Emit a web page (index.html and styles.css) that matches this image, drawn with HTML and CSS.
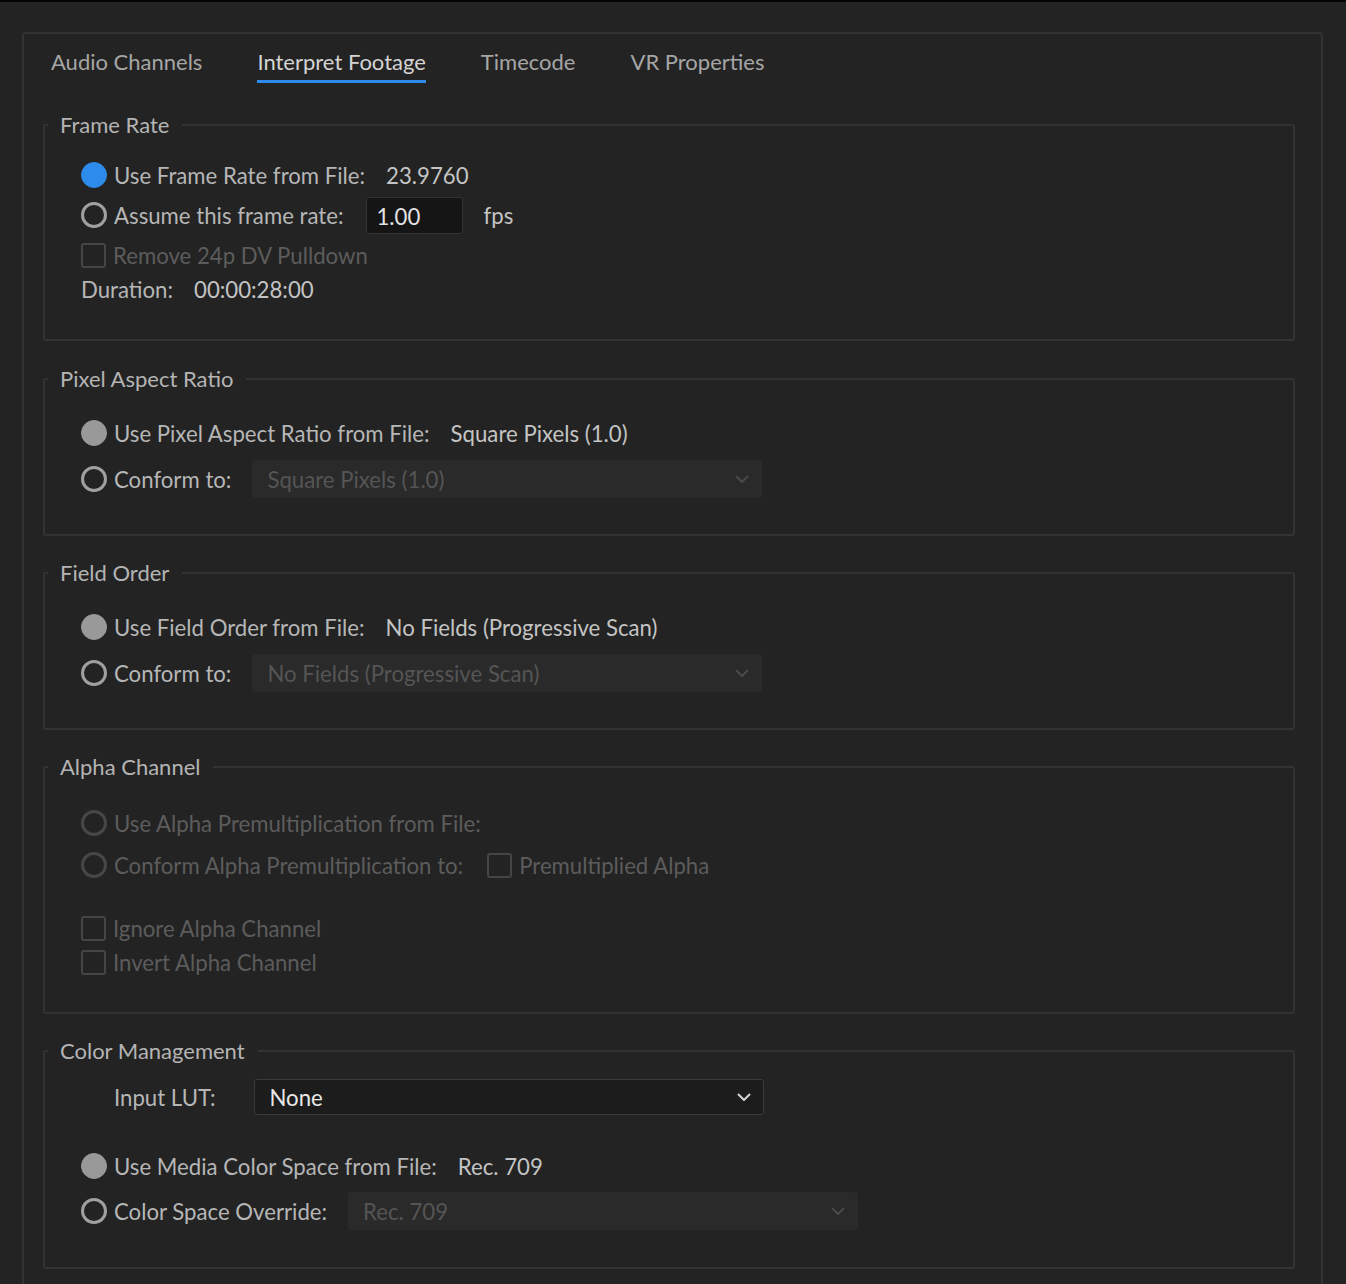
FILE: index.html
```html
<!DOCTYPE html>
<html lang="en">
<head>
    <meta charset="UTF-8">
    <title>Modify Clip</title>
    <link rel="stylesheet" href="styles.css">
</head>
<body>
    <div class="panel">
        <div class="tabs">
            <span class="tab">Audio Channels</span>
            <span class="tab active">Interpret Footage</span>
            <span class="tab">Timecode</span>
            <span class="tab">VR Properties</span>
        </div>

        <!-- Frame Rate -->
        <fieldset class="group frame-rate">
            <legend>Frame Rate</legend>
            <div class="group-body">
                <div class="row r40">
                    <label class="opt"><span class="radio on"></span>Use Frame Rate from File:</label>
                    <span class="value">23.9760</span>
                </div>
                <div class="row r40">
                    <label class="opt"><span class="radio"></span>Assume this frame rate:</label>
                    <span class="num-input">1.00</span>
                    <span class="value">fps</span>
                </div>
                <div class="row r40">
                    <label class="opt disabled"><span class="check"></span>Remove 24p DV Pulldown</label>
                </div>
                <div class="row r28">
                    <span class="label">Duration:</span>
                    <span class="value">00:00:28:00</span>
                </div>
            </div>
        </fieldset>

        <!-- Pixel Aspect Ratio -->
        <fieldset class="group pair">
            <legend>Pixel Aspect Ratio</legend>
            <div class="group-body">
                <div class="row r40">
                    <label class="opt"><span class="radio fixed"></span>Use Pixel Aspect Ratio from File:</label>
                    <span class="value">Square Pixels (1.0)</span>
                </div>
                <div class="row r38 spaced">
                    <label class="opt"><span class="radio"></span>Conform to:</label>
                    <div class="dropdown off">
                        <span>Square Pixels (1.0)</span>
                        <svg class="chev" viewBox="0 0 14 8"><path d="M1 1l6 6 6-6"/></svg>
                    </div>
                </div>
            </div>
        </fieldset>

        <!-- Field Order -->
        <fieldset class="group pair">
            <legend>Field Order</legend>
            <div class="group-body">
                <div class="row r40">
                    <label class="opt"><span class="radio fixed"></span>Use Field Order from File:</label>
                    <span class="value">No Fields (Progressive Scan)</span>
                </div>
                <div class="row r38 spaced">
                    <label class="opt"><span class="radio"></span>Conform to:</label>
                    <div class="dropdown off">
                        <span>No Fields (Progressive Scan)</span>
                        <svg class="chev" viewBox="0 0 14 8"><path d="M1 1l6 6 6-6"/></svg>
                    </div>
                </div>
            </div>
        </fieldset>

        <!-- Alpha Channel -->
        <fieldset class="group alpha">
            <legend>Alpha Channel</legend>
            <div class="group-body">
                <div class="row r42">
                    <label class="opt disabled"><span class="radio"></span>Use Alpha Premultiplication from File:</label>
                </div>
                <div class="row r42">
                    <label class="opt disabled"><span class="radio"></span>Conform Alpha Premultiplication to:</label>
                    <label class="opt disabled"><span class="check"></span>Premultiplied Alpha</label>
                </div>
                <div class="row r34 gap-top">
                    <label class="opt disabled"><span class="check"></span>Ignore Alpha Channel</label>
                </div>
                <div class="row r34">
                    <label class="opt disabled"><span class="check"></span>Invert Alpha Channel</label>
                </div>
            </div>
        </fieldset>

        <!-- Color Management -->
        <fieldset class="group color">
            <legend>Color Management</legend>
            <div class="group-body">
                <div class="row r36 lut">
                    <span class="label">Input LUT:</span>
                    <div class="dropdown">
                        <span>None</span>
                        <svg class="chev" viewBox="0 0 14 8"><path d="M1 1l6 6 6-6"/></svg>
                    </div>
                </div>
                <div class="row r40 media">
                    <label class="opt"><span class="radio fixed"></span>Use Media Color Space from File:</label>
                    <span class="value">Rec. 709</span>
                </div>
                <div class="row r38 spaced">
                    <label class="opt"><span class="radio"></span>Color Space Override:</label>
                    <div class="dropdown off">
                        <span>Rec. 709</span>
                        <svg class="chev" viewBox="0 0 14 8"><path d="M1 1l6 6 6-6"/></svg>
                    </div>
                </div>
            </div>
        </fieldset>
    </div>
</body>
</html>
```

FILE: styles.css
```css
body {
    margin: 0;
    background-color: #232323;
    border-top: 2px solid #050505;
    font-family: 'Lato', 'Noto Sans', sans-serif;
    font-size: 22px;
    color: #b4b4b4;
}

.panel {
    margin: 30px 23px 0 22px;
    height: 1241px;
    border: 2px solid #333;
    border-radius: 4px;
    padding: 14px 26px 0 19px;
}

/* tab strip */
.tabs {
    display: flex;
    gap: 55px;
    padding-left: 8px;
    margin-bottom: 28px;
}

.tab {
    line-height: 28px;
    padding-bottom: 4px;
    border-bottom: 3px solid transparent;
    color: #a6a6a6;
}

.tab.active {
    color: #d4d4d4;
    border-bottom-color: #2d8ceb;
}

/* group boxes */
.group {
    margin: 0 0 23px 0;
    padding: 0 0 0 3px;
    border: 2px solid #333;
    border-radius: 3px;
    min-width: 0;
    font-size: 22.2px;
}

.group.frame-rate {
    margin-bottom: 24px;
}

.group legend {
    padding: 0 13px 0 12px;
    line-height: 28px;
    font-size: 22px;
    color: #b4b4b4;
}

.group-body {
    padding-left: 33px;
}

.frame-rate .group-body { padding-top: 16px; padding-bottom: 36px; }
.pair .group-body { padding-top: 20px; padding-bottom: 36px; }
.alpha .group-body { padding-top: 21px; padding-bottom: 33px; }
.color .group-body { padding-top: 14px; padding-bottom: 37px; }
.color { margin-bottom: 0; }

.row {
    display: flex;
    align-items: center;
    gap: 21px;
}

.r28 { height: 28px; }
.r34 { height: 34px; }
.r36 { height: 36px; }
.r38 { height: 38px; }
.r40 { height: 40px; }
.r42 { height: 42px; }

.spaced { margin-top: 7px; }
.gap-top { margin-top: 25px; }
.media { margin-top: 31px; }
.color .spaced { margin-top: 6px; }

.opt {
    display: flex;
    align-items: center;
    gap: 7px;
    color: #b6b6b6;
}

.opt.disabled {
    color: #5c5c5c;
}

.value {
    color: #c4c4c4;
}

.label {
    color: #b6b6b6;
}

/* radio + checkbox */
.radio {
    width: 26px;
    height: 26px;
    box-sizing: border-box;
    border: 3px solid #a0a0a0;
    border-radius: 50%;
}

.radio.on {
    border: 1px solid #2d8ceb;
    background: #2d8ceb;
}

.radio.fixed {
    border: 1px solid #999;
    background: #999;
}

.disabled .radio {
    border-color: #474747;
}

.check {
    width: 25px;
    height: 25px;
    box-sizing: border-box;
    border: 2px solid #454545;
    border-radius: 3px;
}

.alpha .row .opt + .opt {
    margin-left: 3px;
}

/* inputs */
.num-input {
    width: 97px;
    height: 37px;
    box-sizing: border-box;
    padding: 2px 10px 0;
    background: #151515;
    border: 1px solid #333;
    border-radius: 3px;
    line-height: 33px;
    color: #e2e2e2;
    margin-left: 1px;
}

.dropdown {
    width: 510px;
    height: 36px;
    box-sizing: border-box;
    display: flex;
    align-items: center;
    justify-content: space-between;
    padding: 0 12px 0 14px;
    background: #1c1c1c;
    border: 1px solid #3a3a3a;
    border-radius: 3px;
    color: #e8e8e8;
}

.dropdown.off {
    height: 38px;
    background: #2a2a2a;
    border-color: #2a2a2a;
    color: #555;
}

.chev {
    width: 14px;
    height: 8px;
    fill: none;
    stroke: #d6d6d6;
    stroke-width: 2;
}

.off .chev {
    stroke: #4a4a4a;
}

.lut .label {
    margin-left: 33px;
    margin-right: 18px;
}
```
